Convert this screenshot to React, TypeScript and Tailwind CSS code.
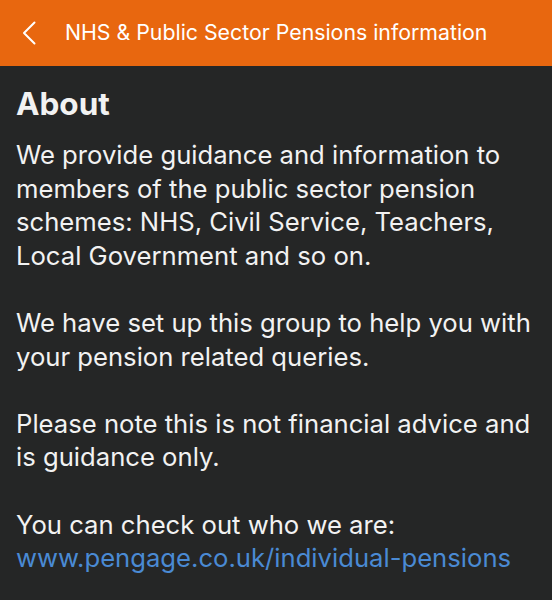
const paragraphs = [
  'We provide guidance and information to members of the public sector pension schemes: NHS, Civil Service, Teachers, Local Government and so on.',
  'We have set up this group to help you with your pension related queries.',
  'Please note this is not financial advice and is guidance only.',
];

const BackIcon = () => (
  <svg width="14" height="24" viewBox="0 0 14 24" fill="none" className="shrink-0">
    <path d="M12.5 1.5 L2 12 L12.5 22.5" stroke="white" strokeWidth="2" strokeLinecap="round" strokeLinejoin="round" />
  </svg>
);

export default function App() {
  return (
    <div className="w-[552px] h-[600px] overflow-hidden bg-[#252626] font-['Inter',sans-serif]">
      <header className="h-[66px] bg-[#e8670f] flex items-center pl-[22px] gap-[29px] text-white">
        <BackIcon />
        <h1 className="text-[21.3px]">NHS &amp; Public Sector Pensions information</h1>
      </header>
      <main className="px-4 pt-[19px] text-[#f2f2f2]">
        <h2 className="text-[31.5px] font-bold leading-[38px] mb-[15px]">About</h2>
        <div className="text-[25.65px] leading-[33.6px] flex flex-col gap-[33.6px]">
          {paragraphs.map((p) => (
            <p key={p}>{p}</p>
          ))}
          <p>
            You can check out who we are:
            <br />
            <span className="text-[#4a8ad4]">www.pengage.co.uk/individual-pensions</span>
          </p>
        </div>
      </main>
    </div>
  );
}
